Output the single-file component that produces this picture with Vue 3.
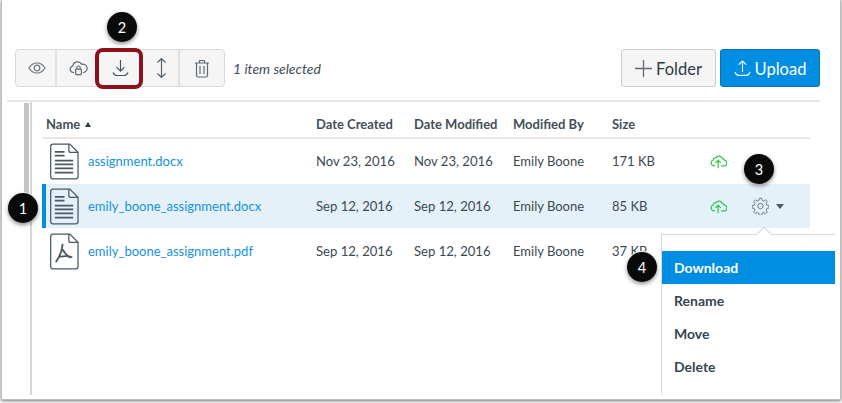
<script setup>
const rows = [
  { name: 'assignment.docx', created: 'Nov 23, 2016', modified: 'Nov 23, 2016', by: 'Emily Boone', size: '171 KB', type: 'doc', sel: false, cloud: true },
  { name: 'emily_boone_assignment.docx', created: 'Sep 12, 2016', modified: 'Sep 12, 2016', by: 'Emily Boone', size: '85 KB', type: 'doc', sel: true, cloud: true },
  { name: 'emily_boone_assignment.pdf', created: 'Sep 12, 2016', modified: 'Sep 12, 2016', by: 'Emily Boone', size: '37 KB', type: 'pdf', sel: false, cloud: false }
]
const menu = ['Download', 'Rename', 'Move', 'Delete']
const cloudPath = 'M6 15H4.800a3.800 3.800 0 0 1-1-7.400 3.200 3.200 0 0 1 3.600-3A4.600 4.600 0 0 1 15.500 5.800a3.300 3.300 0 0 1 2.800 2.200 3.600 3.600 0 0 1-1.800 7H14'
</script>

<template>
  <div class="shot">
    <div class="frame">
      <header class="toolbar">
        <div class="group">
          <button class="tool t1">
            <svg class="nudge" width="18" height="14" viewBox="0 0 18 14" fill="none" stroke="#6b7780" stroke-width="1.200"><path d="M1 7c2-3.400 4.800-5 8-5s6 1.600 8 5c-2 3.400-4.800 5-8 5s-6-1.600-8-5z"/><circle cx="9" cy="7" r="2.800"/></svg>
          </button>
          <button class="tool t2">
            <svg class="nudge" width="19" height="17" viewBox="0 0 19 17" fill="none" stroke="#5f6b74" stroke-width="1.200"><path d="M5 12.500H4.300a3.300 3.300 0 0 1-.5-6.500 4.800 4.800 0 0 1 9-1.600 3.800 3.800 0 0 1 2.400 7.900L14 12.500"/><rect x="6.600" y="9.200" width="5.800" height="5.400" rx=".8" fill="#f5f5f5"/><path d="M7.800 9V7.700a1.700 1.700 0 0 1 3.400 0V9"/></svg>
          </button>
          <button class="tool t3">
            <svg class="nudge" width="17" height="18" viewBox="0 0 17 18" fill="none" stroke="#46525b" stroke-width="1.200"><path d="M8.500 1v11M4.500 8.200l4 4 4-4M1 13.500c1 2.200 2.400 3 4 3h7c1.600 0 3-.8 4-3"/></svg>
          </button>
          <button class="tool t4">
            <svg class="nudge-s" width="11" height="22" viewBox="0 0 11 22" fill="none" stroke="#56626b" stroke-width="1.200"><path d="M5.500 1.500v19M1.500 5.500l4-4 4 4M1.500 16.500l4 4 4-4"/></svg>
          </button>
          <button class="tool t5">
            <svg width="16" height="19" viewBox="0 0 16 19" fill="none" stroke="#5f6b74" stroke-width="1.200"><path d="M1 4h14M5.500 4V1.500h5V4M2.500 4v12.500c0 1 .5 1.500 1.500 1.500h8c1 0 1.500-.5 1.500-1.500V4M6 7v8M10 7v8"/></svg>
          </button>
        </div>
        <span class="selected">1 item selected</span>
        <div class="actions">
          <button class="btn folder">
            <svg width="17" height="17" viewBox="0 0 17 17" stroke="#5f6b74" stroke-width="1.300"><path d="M8.500 0v17M0 8.500h17"/></svg>
            <span class="label">Folder</span>
          </button>
          <button class="btn upload">
            <svg width="17" height="17" viewBox="0 0 17 17" fill="none" stroke="#fff" stroke-width="1.100"><path d="M8.500 12V1M4.800 4.700l3.700-3.700 3.700 3.700M1 12c.8 2.400 2 3.400 3.800 3.400h7.400c1.800 0 3-1 3.800-3.400"/></svg>
            <span class="label">Upload</span>
          </button>
        </div>
      </header>

      <div class="body">
        <aside class="rail"><div class="thumb"></div></aside>
        <section class="table">
          <div class="row head">
            <div class="c-name">Name <i class="sort"></i></div>
            <div class="c-created">Date Created</div>
            <div class="c-mod">Date Modified</div>
            <div class="c-by">Modified By</div>
            <div class="c-size">Size</div>
          </div>
          <div v-for="r in rows" :key="r.name" class="row item" :class="{ sel: r.sel }">
            <div class="c-name">
              <svg v-if="r.type === 'doc'" class="file" width="29" height="37" viewBox="0 0 30 38" fill="none" stroke="#4a5a66" stroke-width="1.300">
                <path d="M3 1h17.500L29 9.500V34.500a2.500 2.500 0 0 1-2.500 2.500H3A2.500 2.500 0 0 1 .7 34.500V3.500A2.500 2.500 0 0 1 3 1z"/>
                <path d="M19.500 1v6.500a2 2 0 0 0 2 2H29"/>
                <path stroke-width="1.800" d="M5 9h10M5 13h10M5 18h19M5 22h19M5 26h19M5 30.500h19"/>
              </svg>
              <svg v-else class="file" width="29" height="37" viewBox="0 0 30 38" fill="none" stroke="#4a5a66" stroke-width="1.300">
                <path d="M3 1h17.500L29 9.500V34.500a2.500 2.500 0 0 1-2.500 2.500H3A2.500 2.500 0 0 1 .7 34.500V3.500A2.500 2.500 0 0 1 3 1z"/>
                <path d="M19.500 1v6.500a2 2 0 0 0 2 2H29"/>
                <path stroke-width="1.900" d="M13 11c-.5 4 .5 8-7 19M10 24.500c4-1 8-1.500 13 .5M13 17c2 3.500 4 6 8 8.500"/>
              </svg>
              <a class="link">{{ r.name }}</a>
            </div>
            <div class="c-created">{{ r.created }}</div>
            <div class="c-mod">{{ r.modified }}</div>
            <div class="c-by">{{ r.by }}</div>
            <div class="c-size">{{ r.size }}</div>
            <div class="c-cloud">
              <svg v-if="r.cloud" width="17" height="15" viewBox="0 0 21 19" fill="none" stroke="#22c13f" stroke-width="1.400"><path :d="cloudPath"/><path d="M10 18V8M6.700 11.300 10 8l3.300 3.300"/></svg>
            </div>
            <div class="c-gear">
              <template v-if="r.sel">
                <svg width="17" height="18" viewBox="0 0 24 24" fill="none" stroke="#6b7a86" stroke-width="1.400"><path d="M10.300 1.500h3.400l.6 3 2.400 1 2.600-1.700 2.400 2.400-1.700 2.600 1 2.400 3 .6v3.400l-3 .6-1 2.400 1.700 2.600-2.400 2.400-2.600-1.700-2.400 1-.6 3h-3.400l-.6-3-2.400-1-2.600 1.700-2.400-2.400 1.700-2.600-1-2.400-3-.6v-3.400l3-.6 1-2.400-1.700-2.600 2.400-2.400 2.600 1.700 2.400-1z" transform="translate(0 -.4)"/><circle cx="12" cy="12" r="3.800"/></svg>
                <i class="caret"></i>
              </template>
            </div>
          </div>
        </section>
      </div>

      <nav class="menu">
        <i class="notch"></i>
        <a v-for="(m, i) in menu" :key="m" class="entry" :class="{ on: i === 0 }">{{ m }}</a>
      </nav>

      <div class="focus"></div>
      <span class="badge b1">1</span>
      <span class="badge b2">2</span>
      <span class="badge b3">3</span>
      <span class="badge b4">4</span>
    </div>
  </div>
</template>

<style scoped>
.shot { width: 842px; height: 403px; overflow: hidden; background: #fff; font-family: Lato, "Open Sans", sans-serif; color: #2d3b45; }
.frame { position: relative; box-sizing: border-box; width: 840px; height: 400px; margin-left: 1px; background: #fff; border: solid #bdbdbd; border-width: 0 1px 1px 1px; box-shadow: 0 1px 3px rgba(0,0,0,.55); }
.toolbar { display: flex; align-items: center; height: 100px; box-sizing: border-box; padding: 49px 20px 13px 13px; }
.group { display: flex; height: 38px; box-sizing: border-box; border: 1px solid #d6d9db; border-radius: 4px; background: #f5f5f5; }
.tool { display: flex; align-items: center; justify-content: center; height: 36px; padding: 0; border: 0; border-right: 2px solid #dfe1e2; background: transparent; box-sizing: border-box; }
.tool:last-child { border-right: 0; }
.t1 { width: 41px; } .t2 { width: 41px; } .t3 { width: 44px; } .t4 { width: 38px; } .t5 { width: 44px; }
.nudge { margin-left: 3px; }
.nudge-s { margin-left: 2px; }
.selected { margin-left: 8px; font-size: 14px; font-style: italic; color: #3f4c56; }
.actions { display: flex; gap: 4px; margin-left: auto; }
.btn { display: flex; align-items: center; justify-content: center; gap: 4px; height: 38px; box-sizing: border-box; border-radius: 3px; font: 16.500px Lato, sans-serif; padding: 0; }
.label { padding-top: 1px; }
.folder { width: 95px; background: #f5f5f5; border: 1px solid #c7cdd1; color: #2d3b45; }
.upload { width: 100px; background: #008ee2; border: 1px solid #0374b5; color: #fff; }
.body { display: flex; box-sizing: border-box; height: 295px; margin: 0 20px 0 5px; border-top: 2px solid #e6e9ea; }
.rail { position: relative; box-sizing: border-box; width: 25px; border-right: 2px solid #d6d6d6; margin-right: 10px; flex: none; }
.thumb { position: absolute; left: 17px; top: 1px; width: 5px; height: 94px; background: #c3c7ca; }
.table { flex: none; width: 768px; }
.row { display: flex; align-items: center; }
.head { height: 37px; box-sizing: border-box; font-size: 13px; font-weight: 700; color: #434f58; border-bottom: 2px solid #e4e7e8; padding-top: 9px; }
.head .c-name { padding-left: 4px; }
.item { height: 45px; box-sizing: border-box; padding-bottom: 1px; font-size: 13px; color: #3b4852; }
.item .c-name { display: flex; align-items: center; padding-left: 8px; }
.item .c-created, .item .c-mod { font-size: 13.100px; }
.sel { height: 44px; padding-bottom: 0; margin-bottom: 1px; background: #e5f1f8; box-shadow: inset 4px 0 0 #008ee2; }
.c-name { width: 274px; box-sizing: border-box; white-space: nowrap; }
.c-created { width: 98px; white-space: nowrap; }
.c-mod { width: 99px; white-space: nowrap; }
.c-by { width: 99px; white-space: nowrap; }
.c-size { width: 89px; white-space: nowrap; }
.c-cloud { width: 35px; display: flex; justify-content: center; }
.c-gear { display: flex; align-items: center; margin-left: 16px; gap: 7px; }
.file { flex: none; }
.link { margin-left: 9px; font-size: 13px; color: #1592e0; }
.sort { display: inline-block; width: 0; height: 0; margin-left: 2px; vertical-align: 2px; border: 3.500px solid transparent; border-top: 0; border-bottom: 5px solid #2d3b45; }
.caret { display: block; width: 0; height: 0; border: 4px solid transparent; border-bottom: 0; border-top: 5px solid #4a5a66; }
.menu { position: absolute; left: 659px; top: 234px; width: 174px; height: 161px; box-sizing: border-box; padding-top: 16px; background: #fff; border-top: 1px solid #d6d9db; border-left: 1px solid #d6d9db; display: flex; flex-direction: column; }
.notch { position: absolute; left: 96px; top: -6px; width: 11px; height: 11px; background: #fff; border-top: 1px solid #d6d9db; border-left: 1px solid #d6d9db; transform: rotate(45deg); }
.entry { display: flex; align-items: center; height: 33px; padding-left: 12px; font-size: 14px; font-weight: 700; color: #374551; }
.on { background: #008ee2; color: #fff; }
.focus { position: absolute; left: 93px; top: 48px; width: 48px; height: 41px; box-sizing: border-box; border: 4px solid #8e1018; border-radius: 8px; }
.badge { position: absolute; display: flex; align-items: center; justify-content: center; width: 30px; height: 30px; border-radius: 50%; background: #0a0a0a; color: #fff; font-size: 14.500px; box-shadow: 0 2px 4px rgba(0,0,0,.45), 0 0 0 1px #fff; }
.b1 { left: 6px; top: 193px; }
.b2 { left: 105px; top: 12px; }
.b3 { left: 742px; top: 154px; }
.b4 { left: 625px; top: 252px; }
</style>
